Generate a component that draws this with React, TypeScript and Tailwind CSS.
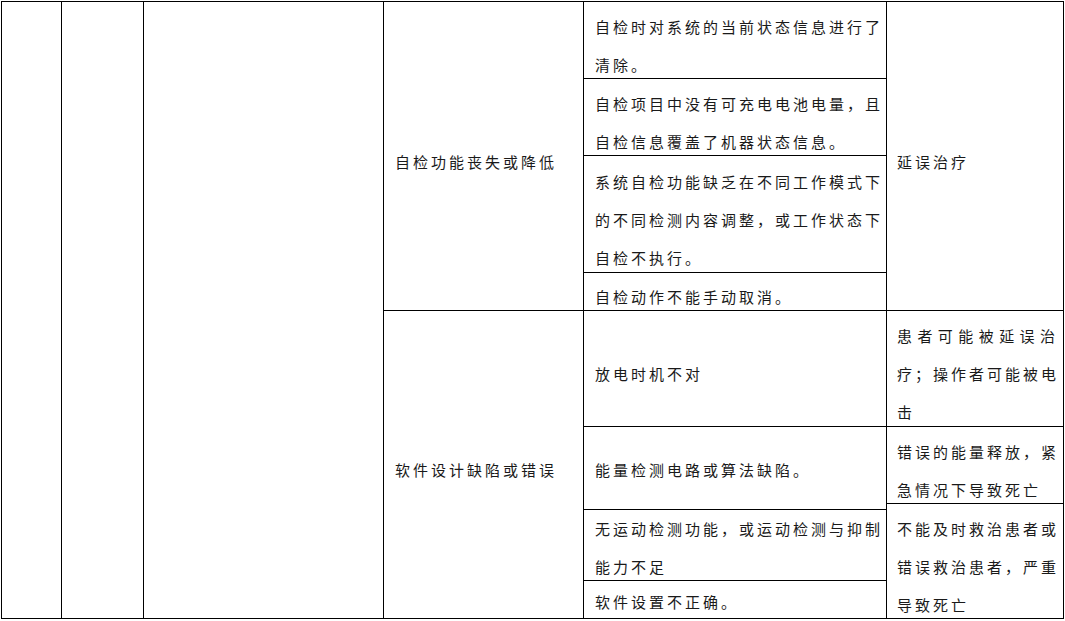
import React from 'react';

// one table cell: lines are given explicitly so breaks match the document
type CellProps = {
  col: string;
  row: string;
  lines?: React.ReactNode[];
  pad?: string;
  px?: string;
};

function Cell({ col, row, lines = [], pad = 'pt-[11px]', px = 'pl-[11px]' }: CellProps) {
  return (
    <div className={`${col} ${row} border-r border-b border-black flex flex-col justify-center ${px}`}>
      {lines.length > 0 && (
        <div className={`${pad} leading-[38px]`}>
          {lines.map((l, i) => (
            <div key={i} className="whitespace-nowrap">
              {l}
            </div>
          ))}
        </div>
      )}
    </div>
  );
}

export default function App() {
  return (
    <div className="w-[1065px] h-[621px] bg-white overflow-hidden">
      <div
        className="ml-[1px] mt-[1px] w-[1063px] border-l border-t border-black grid grid-cols-[60px_82px_240px_200px_303px_177px] grid-rows-[77px_77px_117px_38px_116px_77px_6px_71px_38px] text-[15px] tracking-[3px] text-[#1a1a1a] font-['Noto_Sans_CJK_SC','Noto_Sans_CJK_TC',sans-serif]"
      >
        {/* empty leading columns */}
        <Cell col="col-start-1" row="row-start-1 row-span-9" />
        <Cell col="col-start-2" row="row-start-1 row-span-9" />
        <Cell col="col-start-3" row="row-start-1 row-span-9" />

        {/* hazard causes */}
        <Cell col="col-start-4" row="row-start-1 row-span-4" lines={['自检功能丧失或降低']} />
        <Cell col="col-start-4" row="row-start-5 row-span-5" lines={['软件设计缺陷或错误']} />

        {/* detail column */}
        <Cell col="col-start-5" row="row-start-1" lines={['自检时对系统的当前状态信息进行了', '清除。']} />
        <Cell col="col-start-5" row="row-start-2" lines={['自检项目中没有可充电电池电量，且', '自检信息覆盖了机器状态信息。']} />
        <Cell
          col="col-start-5"
          row="row-start-3"
          lines={['系统自检功能缺乏在不同工作模式下', '的不同检测内容调整，或工作状态下', '自检不执行。']}
        />
        <Cell col="col-start-5" row="row-start-4" lines={['自检动作不能手动取消。']} />
        <Cell col="col-start-5" row="row-start-5" lines={['放电时机不对']} />
        <Cell col="col-start-5" row="row-start-6 row-span-2" pad="pt-[4px]" lines={['能量检测电路或算法缺陷。']} />
        <Cell col="col-start-5" row="row-start-8" pad="pt-[6px]" lines={['无运动检测功能，或运动检测与抑制', '能力不足']} />
        <Cell col="col-start-5" row="row-start-9" pad="pt-[5px]" lines={['软件设置不正确。']} />

        {/* consequences */}
        <Cell col="col-start-6" row="row-start-1 row-span-4" px="pl-[10px]" lines={['延误治疗']} />
        <Cell
          col="col-start-6"
          row="row-start-5"
          px="pl-[10px]"
          lines={[
            <div className="w-[161px] text-justify [text-align-last:justify]">患者可能被延误治</div>,
            '疗；操作者可能被电',
            '击',
          ]}
        />
        <Cell col="col-start-6" row="row-start-6" px="pl-[10px]" lines={['错误的能量释放，紧', '急情况下导致死亡']} />
        <Cell
          col="col-start-6"
          row="row-start-7 row-span-3"
          px="pl-[10px]"
          lines={['不能及时救治患者或', '错误救治患者，严重', '导致死亡']}
        />
      </div>
    </div>
  );
}
